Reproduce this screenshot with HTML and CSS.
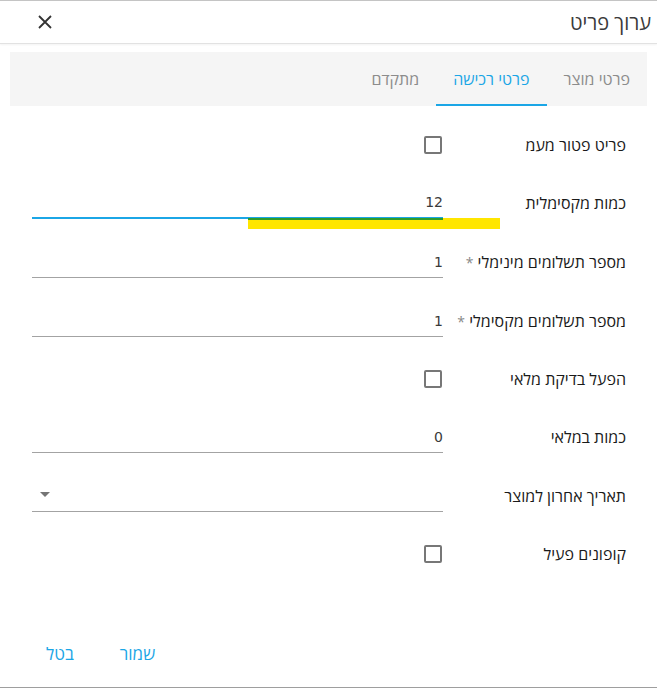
FILE: index.html
```html
<!DOCTYPE html>
<html lang="he" dir="rtl">
<head>
<meta charset="utf-8">
<title>ערוך פריט</title>
<link rel="stylesheet" href="styles.css">
</head>
<body>
<div class="dialog">
  <header class="dlg-header">
    <h1 class="dlg-title">ערוך פריט</h1>
    <button class="close-btn" type="button" aria-label="סגור">
      <svg width="16" height="16" viewBox="0 0 16 16"><path d="M2 2 L14 14 M14 2 L2 14" stroke="#333" stroke-width="1.8" fill="none"/></svg>
    </button>
  </header>

  <nav class="tabs">
    <div class="tab">פרטי מוצר</div>
    <div class="tab active">פרטי רכישה</div>
    <div class="tab">מתקדם</div>
  </nav>

  <form class="form">
    <div class="row row-check">
      <label class="lbl">פריט פטור מעמ</label>
      <div class="field field-check"><span class="checkbox"></span></div>
    </div>
    <div class="row row-text">
      <label class="lbl">כמות מקסימלית</label>
      <div class="field field-text focused">
        <span class="value">12</span>
        <span class="highlight"><span class="highlight-line"></span></span>
      </div>
    </div>
    <div class="row row-text">
      <label class="lbl">מספר תשלומים מינימלי <span class="req">*</span></label>
      <div class="field field-text"><span class="value">1</span></div>
    </div>
    <div class="row row-text">
      <label class="lbl">מספר תשלומים מקסימלי <span class="req">*</span></label>
      <div class="field field-text"><span class="value">1</span></div>
    </div>
    <div class="row row-check">
      <label class="lbl">הפעל בדיקת מלאי</label>
      <div class="field field-check"><span class="checkbox"></span></div>
    </div>
    <div class="row row-text">
      <label class="lbl">כמות במלאי</label>
      <div class="field field-text"><span class="value">0</span></div>
    </div>
    <div class="row row-text">
      <label class="lbl">תאריך אחרון למוצר</label>
      <div class="field field-text field-select"><span class="value"></span><span class="arrow"></span></div>
    </div>
    <div class="row row-check">
      <label class="lbl">קופונים פעיל</label>
      <div class="field field-check"><span class="checkbox"></span></div>
    </div>
  </form>

  <footer class="actions">
    <button class="act-btn" type="button">שמור</button>
    <button class="act-btn" type="button">בטל</button>
  </footer>
</div>
</body>
</html>
```

FILE: styles.css
```css
* { box-sizing: border-box; }
html, body { margin: 0; padding: 0; background: #fff; }
body {
  font-family: "Open Sans", "Liberation Sans", Arial, sans-serif;
  color: #212121;
  width: 657px;
  height: 688px;
  overflow: hidden;
}
.dialog {
  direction: rtl;
  width: 657px;
  height: 688px;
  border-top: 1px solid #c4c4c4;
  border-bottom: 1px solid #9e9e9e;
  display: flex;
  flex-direction: column;
  position: relative;
}
.dlg-header {
  height: 43px;
  border-bottom: 1px solid #e2e2e2;
  box-shadow: 0 1px 2px rgba(0,0,0,0.05);
  display: flex;
  align-items: center;
  justify-content: space-between;
  padding: 0 6px 0 29px;
  flex: none;
}
.dlg-title {
  margin: 0;
  font-size: 20px;
  font-weight: normal;
  color: #3a3a3a;
}
.close-btn {
  background: none;
  border: 0;
  padding: 0;
  width: 32px;
  height: 32px;
  display: flex;
  align-items: center;
  justify-content: center;
}
.tabs {
  margin: 8px 10px 0;
  height: 54px;
  background: #f5f5f5;
  display: flex;
  flex: none;
}
.tab {
  height: 54px;
  padding: 0 17px;
  display: flex;
  align-items: center;
  font-size: 16px;
  color: #8c8c8c;
}
.tab.active {
  color: #1ba6e6;
  border-bottom: 2px solid #1ba6e6;
  padding-top: 2px;
}
.form {
  padding: 10px 31px 0 32px;
  display: flex;
  flex-direction: column;
  flex: none;
}
.row {
  display: flex;
  align-items: center;
}
.row-check { height: 57px; }
.row-text { height: 59px; }
.lbl {
  width: 183px;
  flex: none;
  font-size: 16px;
  color: #1a1a1a;
  text-align: right;
}
.req { color: #888; font-size: 14px; }
.field {
  flex: 1;
  position: relative;
  display: flex;
  align-items: center;
}
.field-text {
  height: 32px;
  border-bottom: 1px solid #a3a3a3;
}
.field-text.focused {
  border-bottom: 2px solid #1ba6e6;
}
.value {
  font-family: "DejaVu Sans", sans-serif;
  font-size: 14px;
  color: #3a3a3a;
}
.field-text .value { padding-top: 1px; }
.checkbox {
  width: 18px;
  height: 18px;
  margin-right: 1px;
  border: 2px solid #777;
  border-radius: 2px;
  display: block;
}
.highlight {
  position: absolute;
  left: 216px;
  bottom: -12px;
  width: 252px;
  height: 11px;
  background: #ffe600;
}
.highlight-line {
  position: absolute;
  left: 0;
  top: 0;
  width: 195px;
  height: 2px;
  background: #2e9c2a;
}
.arrow {
  position: absolute;
  left: 8px;
  top: 12px;
  width: 0;
  height: 0;
  border-left: 5px solid transparent;
  border-right: 5px solid transparent;
  border-top: 5px solid #757575;
}
.actions {
  margin-top: auto;
  display: flex;
  flex-direction: row;
  justify-content: flex-end;
  padding: 0 30px 16px;
  gap: 14px;
  flex: none;
}
.act-btn {
  background: none;
  border: 0;
  height: 36px;
  padding: 0 16px;
  font-family: "Open Sans", "Liberation Sans", Arial, sans-serif;
  font-size: 17px;
  color: #1ba6e6;
}
```
